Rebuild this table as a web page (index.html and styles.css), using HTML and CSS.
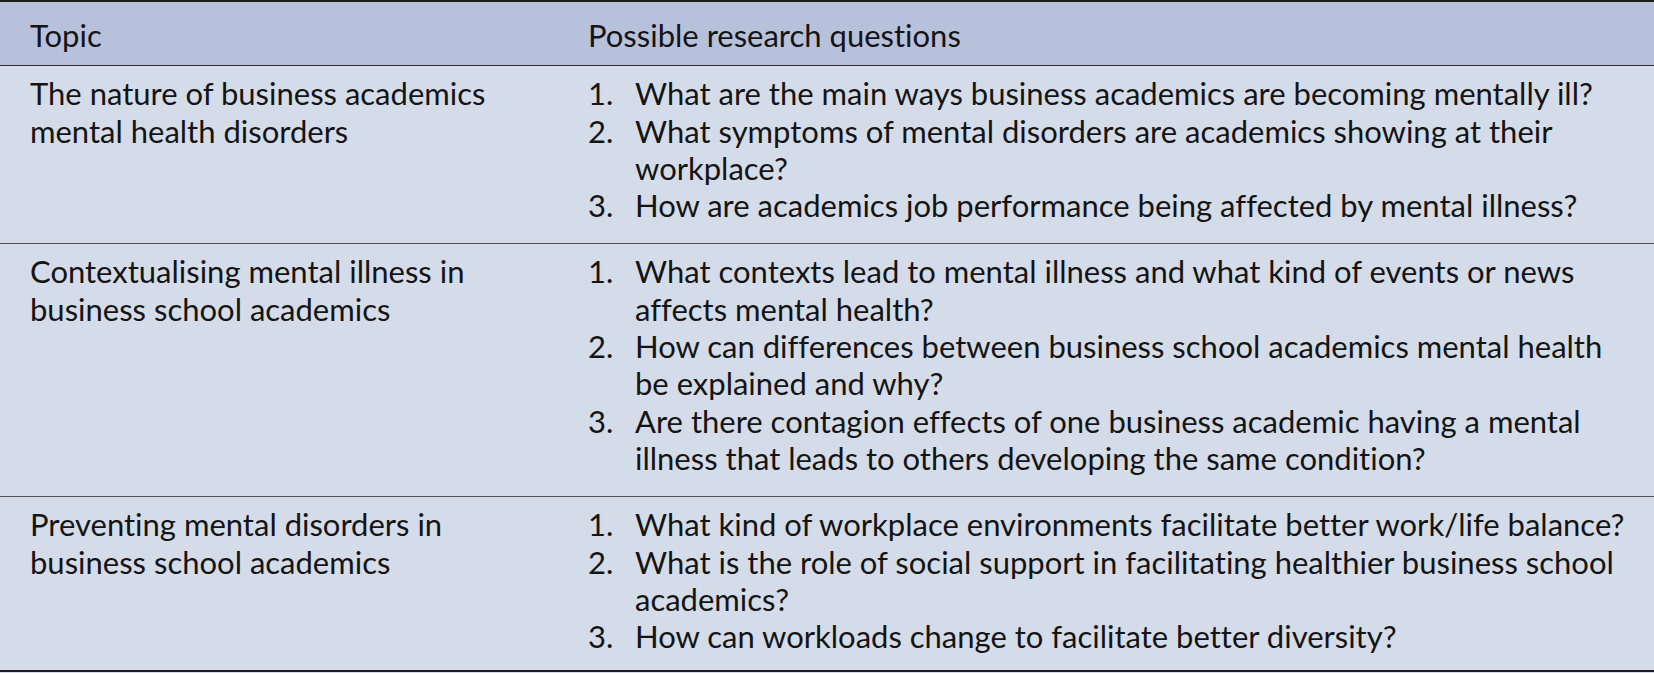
FILE: index.html
```html
<!DOCTYPE html>
<html lang="en">
<head>
<meta charset="utf-8">
<title>Research questions</title>
<link rel="stylesheet" href="styles.css">
</head>
<body>
<div class="table">
  <div class="row head">
    <div class="cell">Topic</div>
    <div class="cell">Possible research questions</div>
  </div>
  <div class="row body">
    <div class="cell">The nature of business academics mental health disorders</div>
    <div class="cell">
      <ol class="qs">
        <li>What are the main ways business academics are becoming mentally ill?</li>
        <li>What symptoms of mental disorders are academics showing at their workplace?</li>
        <li>How are academics job performance being affected by mental illness?</li>
      </ol>
    </div>
  </div>
  <div class="row body">
    <div class="cell">Contextualising mental illness in business school academics</div>
    <div class="cell">
      <ol class="qs">
        <li>What contexts lead to mental illness and what kind of events or news affects mental health?</li>
        <li>How can differences between business school academics mental health be explained and why?</li>
        <li>Are there contagion effects of one business academic having a mental illness that leads to others developing the same condition?</li>
      </ol>
    </div>
  </div>
  <div class="row body last">
    <div class="cell">Preventing mental disorders in business school academics</div>
    <div class="cell">
      <ol class="qs">
        <li>What kind of workplace environments facilitate better work/life balance?</li>
        <li>What is the role of social support in facilitating healthier business school academics?</li>
        <li>How can workloads change to facilitate better diversity?</li>
      </ol>
    </div>
  </div>
</div>
</body>
</html>
```
FILE: styles.css
```css
html, body {
  margin: 0;
  padding: 0;
  background: #d5dce9;
}

.table {
  font-family: Lato, "Open Sans", sans-serif;
  font-size: 31px;
  line-height: 37.3px;
  font-variant-ligatures: no-common-ligatures;
  color: #141414;
  border-top: 2px solid #1c1c1c;
  border-bottom: 2px solid #1c1c1c;
}

.row {
  display: grid;
  grid-template-columns: 558px 1fr;
}

.cell {
  padding: 0 20px 0 30px;
}

.head {
  background: #b8c1dc;
  padding: 15px 0 11px;
  border-bottom: 1px solid #2e2e2e;
}

.body {
  background: #d5dce9;
  padding: 9px 0 19px;
  border-bottom: 1px solid #4f5257;
}

.body.last {
  border-bottom: none;
  padding-bottom: 15px;
}

.qs {
  list-style: none;
  margin: 0;
  padding: 0;
  counter-reset: q;
}

.qs li {
  display: flex;
  counter-increment: q;
}

.qs li::before {
  content: counter(q) ".";
  flex: 0 0 47px;
}
```
